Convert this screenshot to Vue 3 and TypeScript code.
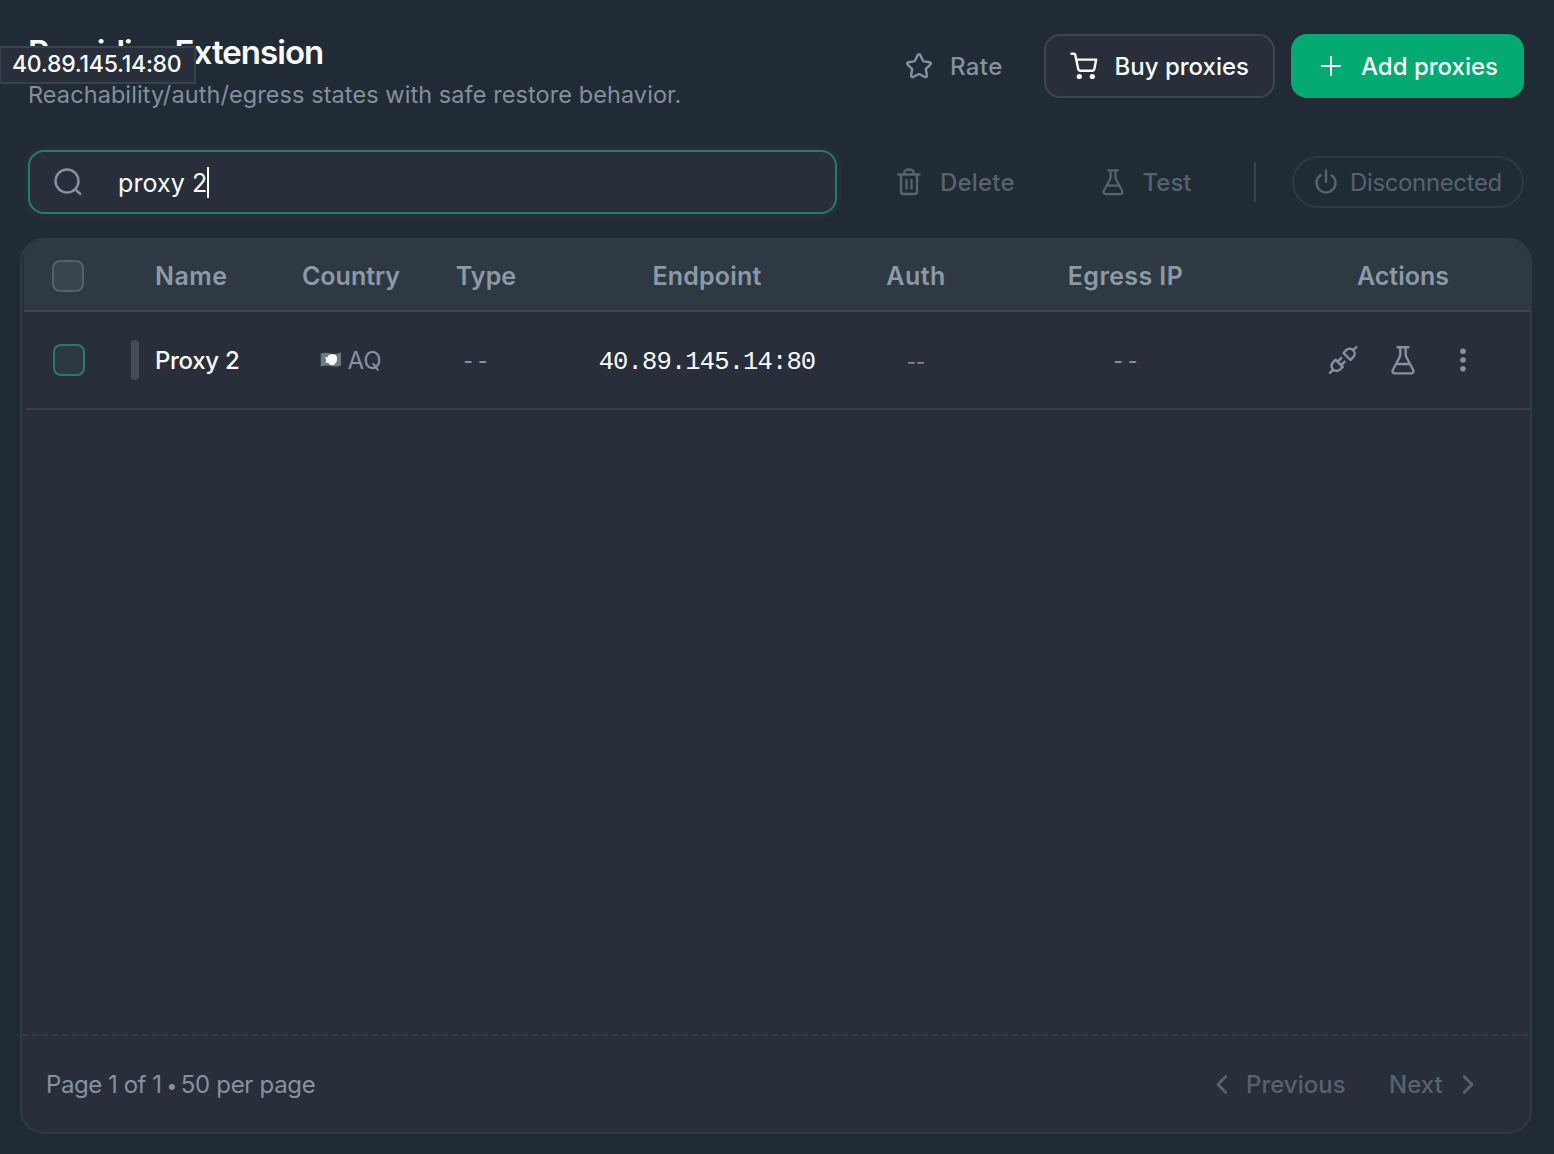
<script setup lang="ts">
import { ref } from 'vue'

interface Proxy {
  name: string
  country: string
  type: string
  endpoint: string
  auth: string
  egress: string
}

const query = ref('proxy 2')
const proxies: Proxy[] = [
  { name: 'Proxy 2', country: 'AQ', type: '--', endpoint: '40.89.145.14:80', auth: '--', egress: '--' },
]
</script>

<template>
  <div class="app">
    <header class="header">
      <div class="heading">
        <h1>Providing Extension</h1>
        <p>Reachability/auth/egress states with safe restore behavior.</p>
      </div>
      <div class="rate">
        <svg width="28" height="28" viewBox="0 0 28 28" class="line"><path d="M14 2.200c.6 0 1 .3 1.300.9l2.700 5.600c.2.4.5.6.9.7l5.700.8c1.200.2 1.600 1.500.8 2.300l-4.200 4.200c-.3.3-.4.7-.3 1.100l1 5.700c.2 1.200-1 2-2 1.500l-5.200-2.700a1.500 1.500 0 0 0-1.400 0L8.100 25c-1 .5-2.200-.3-2-1.500l1-5.700c.1-.4 0-.8-.3-1.100l-4.200-4.200c-.8-.8-.4-2.100.8-2.300l5.700-.8c.4-.1.7-.3.9-.7l2.700-5.600c.3-.6.7-.9 1.300-.9z" /></svg>
        <span class="t-rate">Rate</span>
      </div>
      <button class="btn outline">
        <svg width="28" height="28" viewBox="0 0 28 28" class="line"><path d="M1.500 1.800h2.400c.8 0 1.200.4 1.400 1.100l3 14.400c.2.900.8 1.400 1.700 1.400h12.600c.9 0 1.500-.5 1.700-1.400l1.900-9.700H6.400" /><circle cx="9.300" cy="24.500" r="2.600" class="dot" /><circle cx="22.300" cy="24.500" r="2.600" class="dot" /></svg>
        <span>Buy proxies</span>
      </button>
      <button class="btn primary">
        <svg width="22" height="22" viewBox="0 0 22 22" class="line plus"><path d="M11 2v18M2 11h18" /></svg>
        <span>Add proxies</span>
      </button>
    </header>

    <div class="toolbar">
      <label class="search">
        <svg width="30" height="30" viewBox="0 0 30 30" class="line"><circle cx="14" cy="14" r="11.500" /><path d="M22.500 22.500l4.800 4.500" /></svg>
        <span class="t-query">{{ query }}</span><i class="caret"></i>
      </label>
      <div class="tool delete">
        <svg width="24" height="28" viewBox="0 0 24 28" class="line"><path d="M1.500 6.500h21M4 6.500v17.300c0 1.300.9 2.200 2.200 2.200h11.600c1.300 0 2.200-.9 2.200-2.200V6.500M7 6.500c0-3 1.500-5 4-5h2c2.500 0 4 2 4 5M9.500 12v8.500M14.500 12v8.500" /></svg>
        <span>Delete</span>
      </div>
      <div class="tool test">
        <svg width="24" height="28" viewBox="0 0 26 31" class="line"><path d="M10.300 2.700v7.500c0 1-.4 2-1 3L2.800 25.500c-.8 1.700.2 3.400 2 3.400h16.400c1.800 0 2.800-1.700 2-3.400L16.700 13.200c-.6-1-1-2-1-3V2.700M7.500 2.700h11M6.500 19.500h13" /></svg>
        <span>Test</span>
      </div>
      <i class="divider"></i>
      <div class="status">
        <svg width="24" height="26" viewBox="0 0 24 26" class="line"><path d="M12 1.500v11.500M6.500 6.200a9.500 9.500 0 1 0 11 0" /></svg>
        <span class="t-status">Disconnected</span>
      </div>
    </div>

    <section class="panel">
      <div class="row head">
        <div class="check"><i class="box"></i></div>
        <div class="left"><span class="t-name">Name</span></div>
        <div><span>Country</span></div>
        <div><span class="t-type">Type</span></div>
        <div><span class="t-endpoint">Endpoint</span></div>
        <div><span class="t-auth">Auth</span></div>
        <div><span class="t-egress">Egress IP</span></div>
        <div><span>Actions</span></div>
      </div>
      <div v-for="p in proxies" :key="p.name" class="row item">
        <div class="check"><i class="box green"></i><i class="marker"></i></div>
        <div class="left name"><span>{{ p.name }}</span></div>
        <div class="country">
          <svg width="22" height="18" viewBox="0 0 22 18"><path d="M.8 2.500q5-1.600 10 0t10.200-1.300v13.200q-5 2-10.200.7t-10 .7z" fill="#6f7a88" /><path d="M5 5.500l2 1.300 1.200-2.300 3-1.500 4 .4 1.800 2.500-.2 4.500-2.500 3.300-3.500.5-2.500-2.200-2.800-.6.800-2.200z" fill="#fafcfc" /></svg>
          <span>{{ p.country }}</span>
        </div>
        <div class="mono type"><span>{{ p.type }}</span></div>
        <div class="mono endpoint"><span>{{ p.endpoint }}</span></div>
        <div class="auth"><span>{{ p.auth }}</span></div>
        <div class="mono egress"><span>{{ p.egress }}</span></div>
        <div class="actions">
          <svg width="30" height="30" viewBox="0 0 30 30" class="line"><path d="M15.500 8l7 7 2.700-2.800a4.950 4.950 0 0 0-7-7zM25.400 5l3-3M7.500 14.700l7.200 7.200-2.600 2.600a5 5 0 0 1-7.100-7.100zM5.200 24.600l-3.200 3.200M9.500 16.700l3.600-3.600M13 20.300l3.600-3.600" /></svg>
          <svg width="26" height="31" viewBox="0 0 26 31" class="line"><path d="M10.300 2.200v7.500c0 1-.4 2-1 3L2.800 25c-.8 1.700.2 3.400 2 3.400h16.400c1.800 0 2.800-1.700 2-3.400L16.700 12.700c-.6-1-1-2-1-3V2.200M7.500 2.200h11M6.500 19h13" /></svg>
          <svg width="8" height="26" viewBox="0 0 8 26"><g fill="currentColor"><circle cx="4" cy="4.300" r="2.800" /><circle cx="4" cy="13" r="2.800" /><circle cx="4" cy="21.700" r="2.800" /></g></svg>
        </div>
      </div>
      <div class="empty"></div>
      <svg width="1508" height="2" viewBox="0 0 1508 2"><path d="M0 1h1508" stroke="#303b45" stroke-width="2" stroke-dasharray="6 4" /></svg>
      <footer class="footer">
        <div class="summary">Page 1 of 1<span class="bullet">&nbsp;•&nbsp;</span><span class="size">50 per page</span></div>
        <div class="pager prev">
          <svg width="14" height="22" viewBox="0 0 14 22" class="line"><path d="M10.800 2.500L3 10.500l7.800 8" /></svg>
          <span>Previous</span>
        </div>
        <div class="pager next">
          <span>Next</span>
          <svg width="14" height="22" viewBox="0 0 14 22" class="line"><path d="M3.200 2.500L11 10.500l-7.800 8" /></svg>
        </div>
      </footer>
    </section>

    <div class="tooltip">40.89.145.14:80</div>
  </div>
</template>

<style>
body {
  background: #212b35;
}
</style>

<style scoped>
* {
  box-sizing: border-box;
}
.app {
  position: relative;
  width: 1554px;
  height: 1154px;
  overflow: hidden;
  display: flex;
  flex-direction: column;
  background: #212b35;
  color: #f9fbfb;
  font: 400 24px/30px Inter, 'Open Sans', sans-serif;
  white-space: nowrap;
}
svg {
  display: block;
  flex: none;
}
.line {
  fill: none;
  stroke: currentColor;
  stroke-width: 2.4;
  stroke-linecap: round;
  stroke-linejoin: round;
}
.line.plus {
  stroke-width: 2;
}
.dot {
  fill: currentColor;
  stroke: none;
}
.header {
  display: flex;
  height: 98px;
  padding: 34px 30px 0 28px;
}
.heading {
  flex: 1;
}
h1 {
  margin: 0;
  font-size: 33px;
  line-height: 36px;
  font-weight: 600;
  letter-spacing: -0.95px;
  word-spacing: -3.5px;
}
p {
  margin: 10px 0 0;
  color: #84909e;
  font-size: 23.5px;
  letter-spacing: 0.08px;
}
.rate {
  display: flex;
  align-items: center;
  gap: 17px;
  width: 139px;
  height: 64px;
  color: #8692a0;
  font-weight: 500;
}
.rate span,
.btn span,
.tool span,
.status span {
  padding-top: 2px;
}
.t-rate {
  letter-spacing: 0.4px;
}
.btn {
  display: flex;
  align-items: center;
  height: 64px;
  border: 0;
  border-radius: 16px;
  color: #f9fbfb;
  font: inherit;
  font-weight: 500;
  padding: 0;
}
.outline {
  width: 231px;
  border: 2px solid #3d4752;
  background: #282f3b;
  padding-left: 24px;
  gap: 16.5px;
}
.primary {
  width: 233px;
  margin-left: 16px;
  background: #04aa71;
  padding-left: 29px;
  gap: 19px;
}
.toolbar {
  display: flex;
  align-items: center;
  height: 64px;
  margin-top: 52px;
  padding: 0 30px 0 28px;
  color: #57636e;
}
.search {
  display: flex;
  align-items: center;
  width: 809px;
  height: 64px;
  border: 2px solid #24805f;
  border-radius: 16px;
  background: #282f3b;
  box-shadow: 0 0 0 4px #262f39;
  padding-left: 23px;
  color: #8692a0;
}
.t-query {
  margin-left: 35px;
  padding-top: 2px;
  color: #f9fbfb;
  font-size: 25px;
  letter-spacing: 0.1px;
}
.caret {
  width: 2px;
  height: 31px;
  background: #fff;
}
.tool {
  display: flex;
  align-items: center;
  font-weight: 500;
}
.delete {
  width: 205px;
  padding-left: 60px;
  gap: 19px;
  letter-spacing: 0.2px;
}
.test {
  width: 153px;
  margin-left: 59px;
  gap: 17.5px;
}
.divider {
  width: 2px;
  height: 40px;
  background: #37424c;
}
.status {
  display: flex;
  align-items: center;
  width: 232px;
  height: 52px;
  margin-left: auto;
  border: 2px solid #2d3842;
  border-radius: 26px;
  padding-left: 20px;
  gap: 12px;
}
.t-status {
  letter-spacing: -0.36px;
}
.panel {
  display: flex;
  flex-direction: column;
  width: 1512px;
  height: 896px;
  margin: 24px 0 0 20px;
  border: 2px solid #2e3943;
  border-radius: 24px;
  background: #282f3b;
  overflow: hidden;
}
.row {
  display: grid;
  flex: none;
}
.row > div {
  display: flex;
  align-items: center;
  justify-content: center;
}
.row > .check,
.row > .left {
  justify-content: flex-start;
}
.head {
  grid-template-columns: 131px 122px 148px 122px 320px 98px 321px 234px;
  height: 72px;
  margin-left: 2px;
  padding-top: 2px;
  background: #2f3943;
  border-bottom: 2px solid #3c4751;
  color: #8d99a7;
  font-weight: 600;
  font-size: 25px;
}
.head span {
  padding-bottom: 1px;
}
.t-name {
  letter-spacing: 0.5px;
}
.t-type {
  letter-spacing: 0.1px;
}
.t-endpoint {
  letter-spacing: 0.2px;
}
.t-auth,
.t-egress {
  letter-spacing: 0.4px;
}
.item {
  grid-template-columns: 129px 122px 148px 122px 320px 98px 321px 234px;
  height: 98px;
  margin-left: 4px;
  border-bottom: 2px solid #35404a;
  color: #8692a0;
}
.check {
  padding-left: 28px;
}
.item .check {
  padding-left: 27px;
}
.box {
  width: 32px;
  height: 32px;
  border: 2px solid #55606b;
  border-radius: 8px;
  background: #3a444f;
}
.box.green {
  border-color: #24805f;
  background: #2e3842;
}
.marker {
  width: 8px;
  height: 40px;
  margin-left: 46px;
  border-radius: 4px;
  background: #434e59;
}
.name {
  color: #f9fbfb;
  font-weight: 500;
  letter-spacing: -0.3px;
}
.name span,
.country span {
  padding-top: 2px;
}
.country {
  gap: 5px;
}
.mono {
  font-family: 'Liberation Mono', monospace;
  font-size: 24px;
}
.mono span {
  padding-top: 3px;
}
.row > .type {
  padding-right: 21px;
}
.endpoint {
  color: #f9fbfb;
  font-size: 25.5px;
  letter-spacing: -0.86px;
}
.endpoint span {
  padding-top: 5px;
}
.auth {
  font-size: 20px;
}
.auth span {
  padding-top: 4px;
}
.row > .actions {
  gap: 32px;
  padding-right: 4px;
}
.actions svg:last-child {
  margin: 0 7px 0 11px;
}
.empty {
  flex: 1;
}
.footer {
  display: flex;
  align-items: center;
  height: 96px;
  padding: 0 0 0 24px;
  color: #8692a0;
}
.footer > * {
  padding-top: 1px;
}
.footer > .summary {
  flex: 1;
  padding-top: 3px;
  letter-spacing: -0.45px;
}
.bullet {
  margin: 0 -1px 0 0;
  font-size: 19px;
}
.size {
  letter-spacing: -0.3px;
}
.pager {
  display: flex;
  align-items: center;
  color: #57636e;
  font-weight: 500;
}
.pager .line {
  stroke-width: 2.7;
}
.prev {
  width: 174px;
  gap: 17px;
}
.next {
  width: 141px;
  gap: 18px;
}
.tooltip {
  position: absolute;
  left: 0;
  top: 46px;
  width: 196px;
  height: 38px;
  border: 2px solid #37424c;
  border-left-width: 1px;
  background: #282f3b;
  padding-left: 11px;
  font-size: 23px;
  line-height: 33px;
  font-weight: 500;
  letter-spacing: -0.25px;
}
</style>
